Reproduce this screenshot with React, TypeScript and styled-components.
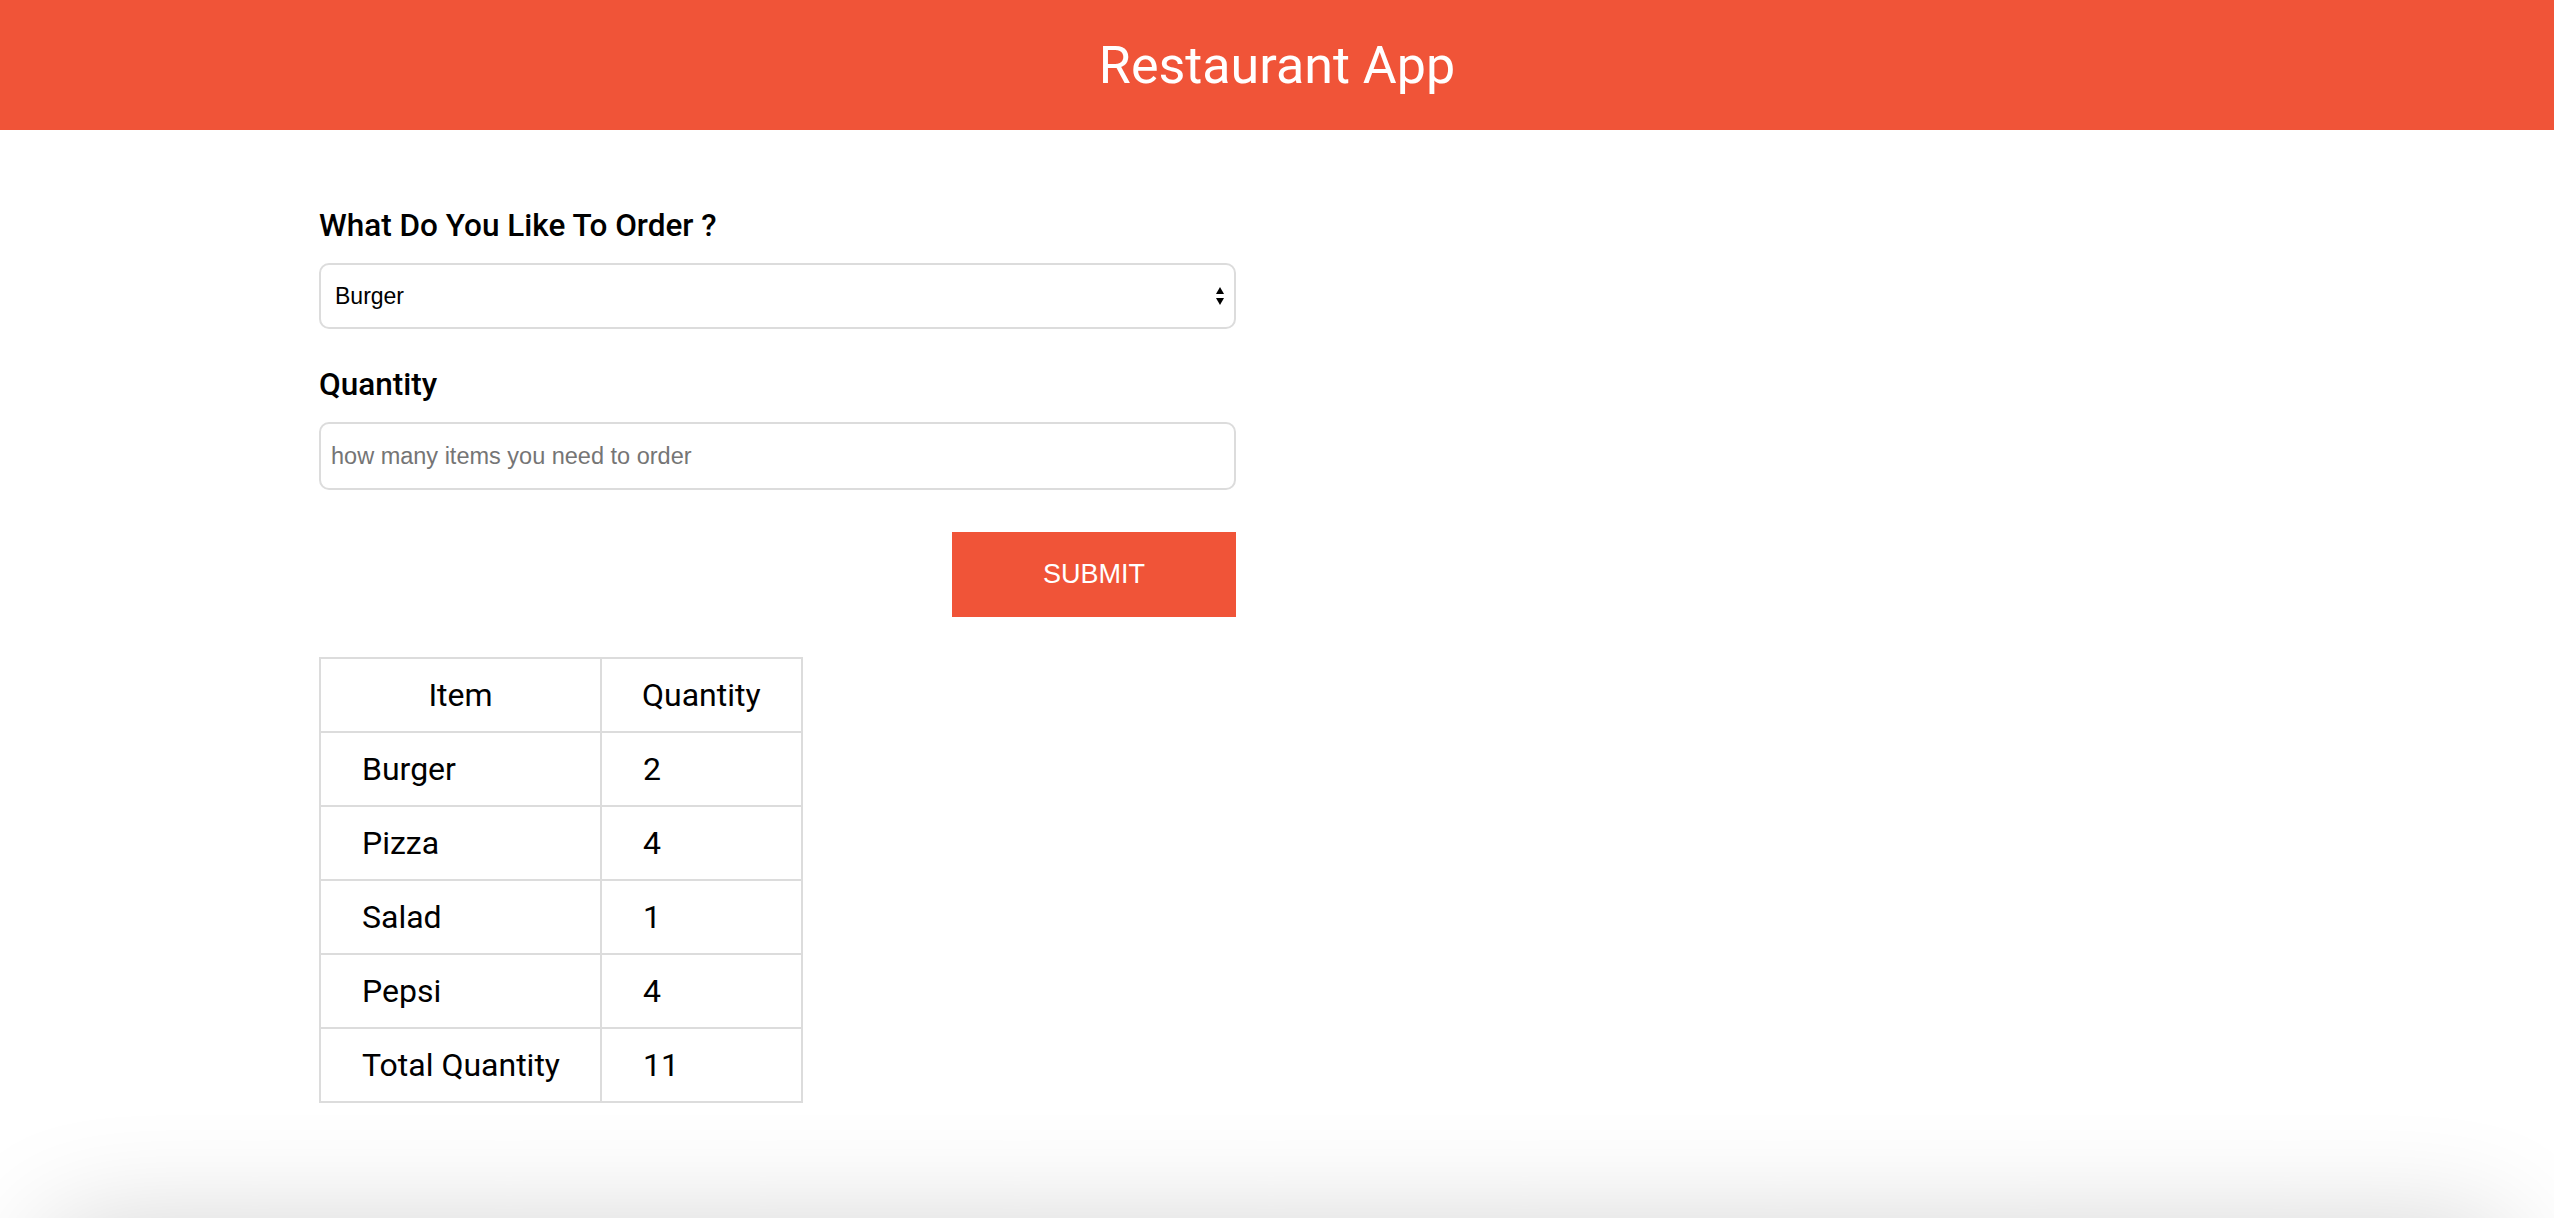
import * as React from "react";
import styled, { createGlobalStyle } from "styled-components";

const orders = [
  { item: "Burger", quantity: 2 },
  { item: "Pizza", quantity: 4 },
  { item: "Salad", quantity: 1 },
  { item: "Pepsi", quantity: 4 },
];

const GlobalStyle = createGlobalStyle`
  body {
    margin: 0;
    background: #fff;
    font-family: Roboto, "Liberation Sans", sans-serif;
    color: #000;
  }
`;

export default function App() {
  const [food, setFood] = React.useState("Burger");
  const [qty, setQty] = React.useState("");
  const total = orders.reduce((sum, o) => sum + o.quantity, 0);

  return (
    <>
      <GlobalStyle />
      <Header>
        <Title>Restaurant App</Title>
      </Header>
      <Main>
        <Form onSubmit={ev => ev.preventDefault()}>
          <Label>What Do You Like To Order ?</Label>
          <SelectWrap>
            <Select value={food} onChange={ev => setFood(ev.currentTarget.value)}>
              <option>Burger</option>
              <option>Pizza</option>
              <option>Salad</option>
              <option>Pepsi</option>
            </Select>
            <SelectArrows width="8" height="18" viewBox="0 0 8 18">
              <path d="M4 0 L8 7 L0 7 Z" fill="#000" />
              <path d="M0 11 L8 11 L4 18 Z" fill="#000" />
            </SelectArrows>
          </SelectWrap>
          <Label>Quantity</Label>
          <QtyInput
            value={qty}
            onChange={ev => setQty(ev.currentTarget.value)}
            placeholder="how many items you need to order"
          />
          <ButtonRow>
            <SubmitButton>SUBMIT</SubmitButton>
          </ButtonRow>
        </Form>
        <OrderTable>
          <thead>
            <tr>
              <Th>Item</Th>
              <Th>Quantity</Th>
            </tr>
          </thead>
          <tbody>
            {orders.map(o => (
              <tr key={o.item}>
                <Td>{o.item}</Td>
                <Td>{o.quantity}</Td>
              </tr>
            ))}
            <tr>
              <Td>Total Quantity</Td>
              <Td>{total}</Td>
            </tr>
          </tbody>
        </OrderTable>
      </Main>
      <Footer />
    </>
  );
}

const Header = styled.header`
  height: 130px;
  background-color: #f05438;
  display: flex;
  align-items: center;
  justify-content: center;
`;

const Title = styled.h1`
  margin: 0;
  color: #fff;
  font-family: Roboto, sans-serif;
  font-weight: 400;
  font-size: 52px;
`;

const Main = styled.main`
  padding: 78px 0 0 319px;
`;

const Form = styled.form`
  width: 917px;
  display: flex;
  flex-flow: column;
`;

const Label = styled.label`
  font-family: Roboto, sans-serif;
  font-weight: 500;
  font-size: 31.5px;
  line-height: 36px;
  margin-bottom: 19px;
`;

const SelectWrap = styled.div`
  position: relative;
  margin-bottom: 38px;
`;

const Select = styled.select`
  appearance: none;
  width: 100%;
  height: 66px;
  box-sizing: border-box;
  border: solid 2px #dcdcdc;
  border-radius: 10px;
  background: #fff;
  padding: 0 40px 0 14px;
  font-family: "Liberation Sans", Arial, sans-serif;
  font-size: 23px;
  color: #000;
  outline: none;
`;

const SelectArrows = styled.svg`
  position: absolute;
  right: 12px;
  top: 24px;
  pointer-events: none;
`;

const QtyInput = styled.input.attrs({
  type: "text",
})`
  width: 100%;
  height: 68px;
  box-sizing: border-box;
  border: solid 2px #dcdcdc;
  border-radius: 10px;
  padding: 0 10px;
  font-family: "Liberation Sans", Arial, sans-serif;
  font-size: 23.5px;
  color: #000;
  outline: none;

  &::placeholder {
    color: #757575;
  }
`;

const ButtonRow = styled.div`
  display: flex;
  justify-content: flex-end;
  margin-top: 42px;
`;

const SubmitButton = styled.button.attrs({
  type: "submit",
})`
  width: 284px;
  height: 85px;
  border: none;
  border-radius: 0;
  background-color: #f05438;
  color: #fff;
  font-family: "Liberation Sans", Arial, sans-serif;
  font-size: 27px;
  cursor: pointer;
`;

const OrderTable = styled.table`
  margin-top: 40px;
  border-collapse: collapse;
  border: solid 2px #dcdcdc;
  font-family: Roboto, sans-serif;
  font-size: 32px;
  line-height: 36px;
`;

const Th = styled.th`
  border: solid 2px #dcdcdc;
  padding: 18px 40px;
  font-weight: 400;
  text-align: center;
`;

const Td = styled.td`
  border: solid 2px #dcdcdc;
  padding: 18px 40px 18px 41px;
  text-align: left;
`;

const Footer = styled.footer`
  margin: 128px 50px 0;
  height: 120px;
  background: #fff;
  box-shadow: 0 0 120px rgba(0, 0, 0, 0.2);
`;
